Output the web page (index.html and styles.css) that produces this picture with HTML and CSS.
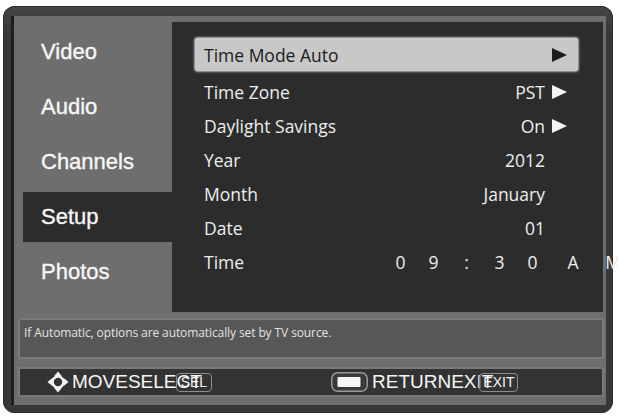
FILE: index.html
```html
<!DOCTYPE html>
<html lang="en">
<head>
<meta charset="utf-8">
<title>Setup - Time</title>
<link rel="stylesheet" href="styles.css">
</head>
<body>
<div class="tv">
  <div class="screen">
    <div class="main">
      <nav class="menu">
        <div class="menu-item">Video</div>
        <div class="menu-item">Audio</div>
        <div class="menu-item">Channels</div>
        <div class="menu-item is-active">Setup</div>
        <div class="menu-item">Photos</div>
      </nav>
      <section class="panel">
        <div class="row is-selected">
          <span class="label">Time Mode Auto</span>
          <span class="value"></span>
          <svg class="arrow" viewBox="0 0 15 14" width="15" height="14"><polygon points="0,0 15,7 0,14"/></svg>
        </div>
        <div class="row">
          <span class="label">Time Zone</span>
          <span class="value">PST</span>
          <svg class="arrow" viewBox="0 0 15 14" width="15" height="14"><polygon points="0,0 15,7 0,14"/></svg>
        </div>
        <div class="row">
          <span class="label">Daylight Savings</span>
          <span class="value">On</span>
          <svg class="arrow" viewBox="0 0 15 14" width="15" height="14"><polygon points="0,0 15,7 0,14"/></svg>
        </div>
        <div class="row">
          <span class="label">Year</span>
          <span class="value">2012</span>
          <span class="arrow-space"></span>
        </div>
        <div class="row">
          <span class="label">Month</span>
          <span class="value">January</span>
          <span class="arrow-space"></span>
        </div>
        <div class="row">
          <span class="label">Date</span>
          <span class="value">01</span>
          <span class="arrow-space"></span>
        </div>
        <div class="row">
          <span class="label">Time</span>
          <span class="clock">
            <span class="digit">0</span><span class="digit">9</span><span class="digit">:</span><span class="digit">3</span><span class="digit">0</span><span class="digit wide gap">A</span><span class="digit wide">M</span>
          </span>
        </div>
      </section>
    </div>
    <div class="help">If Automatic, options are automatically set by TV source.</div>
    <div class="keys">
      <div class="key-group">
        <svg class="icon-move" viewBox="0 0 22 22" width="22" height="22">
          <circle cx="11" cy="11" r="5.4" fill="none" stroke="#f4f4f4" stroke-width="2.4"/>
          <polygon points="11,0.5 6.8,5.6 15.2,5.6" fill="#f4f4f4"/>
          <polygon points="11,21.5 6.8,16.4 15.2,16.4" fill="#f4f4f4"/>
          <polygon points="0.5,11 5.6,6.8 5.6,15.2" fill="#f4f4f4"/>
          <polygon points="21.5,11 16.4,6.8 16.4,15.2" fill="#f4f4f4"/>
        </svg>
        <span class="key-text">MOVESELECT</span>
        <span class="key-cap key-cap-sel">SEL</span>
      </div>
      <div class="key-group">
        <svg class="icon-return" viewBox="0 0 37 20" width="37" height="20">
          <rect x="0.75" y="0.75" width="35.5" height="18.5" rx="6" fill="#3a3a3a" stroke="#9a9a9a" stroke-width="1.5"/>
          <rect x="6.5" y="5" width="23" height="10" rx="1" fill="#f6f6f6"/>
        </svg>
        <span class="key-text">RETURNEXIT</span>
        <span class="key-cap key-cap-exit">EXIT</span>
      </div>
    </div>
  </div>
</div>
</body>
</html>
```
FILE: styles.css
```css
html, body {
  margin: 0;
  padding: 0;
  background: #ffffff;
  overflow: hidden;
}

/* outer bezel of the on-screen menu */
.tv {
  box-sizing: border-box;
  width: 610px;
  height: 407px;
  margin: 6px 0 0 3px;
  padding: 10px 7px 8px 11px;
  border-radius: 12px;
  background: linear-gradient(#474747, #383838 6%, #383838);
  box-shadow: inset 0 0 0 1px #2c2c2c;
}

.screen {
  box-sizing: border-box;
  height: 389px;
  padding-bottom: 8px;
  background: #6e6e6e;
  box-shadow: -3px 0 0 #1f1f1f;
  display: flex;
  flex-direction: column;
}

.main {
  display: flex;
  height: 296px;
}

/* left category menu */
.menu {
  width: 158px;
  flex-shrink: 0;
  padding-top: 11px;
  display: flex;
  flex-direction: column;
  gap: 5px;
}

.menu-item {
  height: 50px;
  margin-left: 9px;
  padding-left: 18px;
  display: flex;
  align-items: center;
  font-family: "Liberation Sans", Arial, sans-serif;
  font-size: 22px;
  color: #f7f7f7;
  -webkit-text-stroke: 0.35px #f7f7f7;
}

.menu-item.is-active {
  background: #2c2c2c;
}

/* settings list */
.panel {
  box-sizing: border-box;
  width: 431px;
  height: 290px;
  margin-top: 6px;
  padding: 16px 25px 0 23px;
  background: #2c2c2c;
  display: flex;
  flex-direction: column;
  font-family: "Open Sans", "Noto Sans", sans-serif;
  font-size: 17.5px;
  color: #eeeeee;
}

.row {
  box-sizing: border-box;
  height: 34px;
  padding: 0 11px 0 9px;
  display: flex;
  align-items: center;
  white-space: nowrap;
}

.row.is-selected {
  height: 33px;
  margin-bottom: 4px;
  background: #c8c8c8;
  border-radius: 3px;
  box-shadow: 0 0 2px 1px #b5b5b5;
  color: #1c1c1c;
}

.label {
  width: 180px;
  flex-shrink: 0;
}

.value {
  margin-left: auto;
}

.arrow {
  margin-left: 7px;
  fill: #f4f4f4;
  flex-shrink: 0;
}

.is-selected .arrow {
  fill: #1c1c1c;
}

.arrow-space {
  width: 22px;
  flex-shrink: 0;
}

.clock {
  display: flex;
  flex-shrink: 0;
}

.digit {
  width: 33px;
  text-align: center;
}

.digit.wide {
  width: 40px;
}

.digit.gap {
  margin-left: 4px;
}

/* help line */
.help {
  box-sizing: border-box;
  height: 41px;
  margin: 6px 2px 0 4px;
  padding: 4px 0 0 4px;
  background: #575757;
  border: 2px solid #7a7a7a;
  border-radius: 2px;
  font-family: "Open Sans", "Noto Sans", sans-serif;
  font-size: 12px;
  letter-spacing: -0.1px;
  color: #e2e2e2;
  white-space: nowrap;
}

/* remote key legend */
.keys {
  box-sizing: border-box;
  height: 30px;
  margin: 8px 2px 0 4px;
  background: #333333;
  border: 2px solid #7a7a7a;
  border-radius: 2px;
  display: grid;
  grid-template-columns: 311px 1fr;
  align-items: center;
}

.key-group {
  display: flex;
  align-items: center;
}

.key-group:first-child {
  padding-left: 27px;
}

.icon-move {
  margin-right: 3px;
  flex-shrink: 0;
}

.icon-return {
  margin-right: 4px;
  flex-shrink: 0;
}

.key-text {
  font-family: "Liberation Sans", Arial, sans-serif;
  font-size: 19px;
  color: #f6f6f6;
  white-space: nowrap;
}

.key-cap {
  box-sizing: border-box;
  height: 19px;
  display: inline-flex;
  align-items: center;
  justify-content: center;
  border: 1px solid #8c8c8c;
  border-radius: 4px;
  font-family: "Liberation Sans", Arial, sans-serif;
  font-size: 14px;
  color: #f6f6f6;
}

.key-cap-sel {
  width: 36px;
  margin-left: -26px;
}

.key-cap-exit {
  width: 39px;
  margin-left: -14px;
}
```
